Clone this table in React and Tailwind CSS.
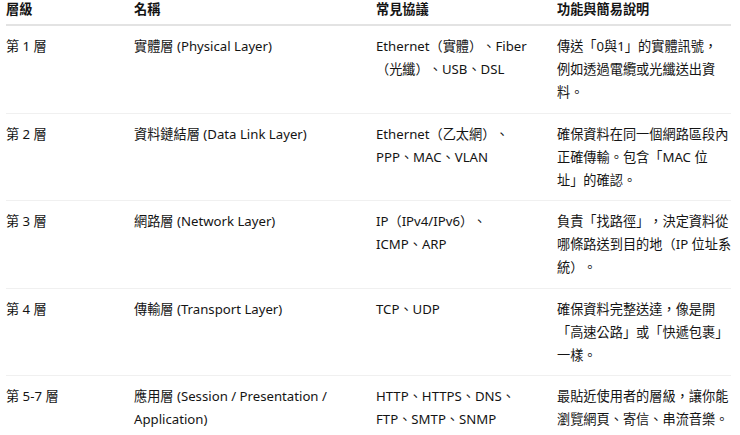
const rows = [
  {
    level: '第 1 層',
    name: ['實體層 (Physical Layer)'],
    protocols: ['Ethernet（實體）、Fiber', '（光纖）、USB、DSL'],
    desc: ['傳送「0與1」的實體訊號，', '例如透過電纜或光纖送出資', '料。'],
  },
  {
    level: '第 2 層',
    name: ['資料鏈結層 (Data Link Layer)'],
    protocols: ['Ethernet（乙太網）、', 'PPP、MAC、VLAN'],
    desc: ['確保資料在同一個網路區段內', '正確傳輸。包含「MAC 位', '址」的確認。'],
  },
  {
    level: '第 3 層',
    name: ['網路層 (Network Layer)'],
    protocols: ['IP（IPv4/IPv6）、', 'ICMP、ARP'],
    desc: ['負責「找路徑」，決定資料從', '哪條路送到目的地（IP 位址系', '統）。'],
  },
  {
    level: '第 4 層',
    name: ['傳輸層 (Transport Layer)'],
    protocols: ['TCP、UDP'],
    desc: ['確保資料完整送達，像是開', '「高速公路」或「快遞包裹」', '一樣。'],
  },
  {
    level: '第 5-7 層',
    name: ['應用層 (Session / Presentation /', 'Application)'],
    protocols: ['HTTP、HTTPS、DNS、', 'FTP、SMTP、SNMP'],
    desc: ['最貼近使用者的層級，讓你能', '瀏覽網頁、寄信、串流音樂。'],
  },
];

const cols = 'grid grid-cols-[128px_242px_181px_174px]';

function Lines({ lines }) {
  return (
    <div>
      {lines.map((l, i) => (
        <div key={i} className="whitespace-nowrap">
          {l}
        </div>
      ))}
    </div>
  );
}

export default function App() {
  return (
    <div
      className="w-[740px] h-[435px] overflow-hidden bg-white text-[#141414] text-[13.2px] leading-[23px] [text-spacing-trim:space-all]"
      style={{ fontFamily: '"Noto Sans", "Noto Sans CJK TC", sans-serif' }}
    >
      <div className="ml-[6px] w-[725px] -mt-[2px]">
        <div className={`${cols} border-b-2 border-[#e3e3e3] pb-[3px] font-bold`}>
          <div>層級</div>
          <div>名稱</div>
          <div>常見協議</div>
          <div>功能與簡易說明</div>
        </div>
        {rows.map((r) => (
          <div
            key={r.level}
            className={`${cols} border-b border-[#f0f0f0] pt-[9px] pb-[8.5px] h-[87.5px]`}
          >
            <div>{r.level}</div>
            <Lines lines={r.name} />
            <Lines lines={r.protocols} />
            <Lines lines={r.desc} />
          </div>
        ))}
      </div>
    </div>
  );
}
